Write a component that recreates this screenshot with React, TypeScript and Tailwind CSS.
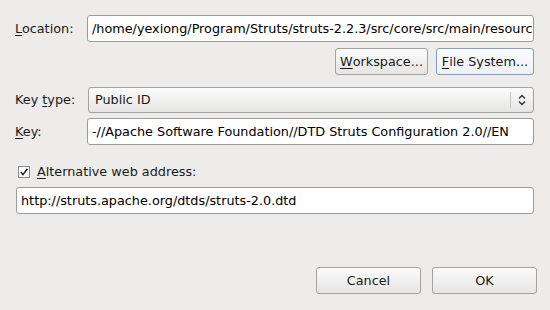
import React from "react";

const font = { fontFamily: '"DejaVu Sans", "Liberation Sans", sans-serif' };

function Mn({ c }: { c: string }) {
  return <span className="underline underline-offset-[2px] decoration-1">{c}</span>;
}

function Field({ value, className = "" }: { value: string; className?: string }) {
  return (
    <div
      className={`h-[27px] bg-white border border-[#9c9c9c] rounded-[3px] flex items-center pl-[4px] overflow-hidden whitespace-nowrap text-[12.8px] text-black ${className}`}
    >
      {value}
    </div>
  );
}

function Button({ children, focus = false, className = "" }: { children: React.ReactNode; focus?: boolean; className?: string }) {
  return (
    <div
      className={`h-[27px] rounded-[3px] border flex items-center justify-center text-[12.8px] text-[#1a1a1a] ${
        focus
          ? "border-[#7d9ec9] bg-gradient-to-b from-[#fbfcfd] to-[#eef1f5]"
          : "border-[#a3a3a3] bg-gradient-to-b from-[#fcfcfc] to-[#e6e5e4]"
      } ${className}`}
    >
      {children}
    </div>
  );
}

export default function App() {
  return (
    <div className="w-[550px] h-[310px] bg-[#edeceb] text-[12.8px] text-[#1a1a1a] pl-[15px] pr-[16px] pt-[15px]" style={font}>
      {/* Location */}
      <div className="flex items-center">
        <div className="w-[72px]">
          <Mn c="L" />ocation:
        </div>
        <Field className="flex-1" value="/home/yexiong/Program/Struts/struts-2.2.3/src/core/src/main/resources/struts-2.0.dtd" />
      </div>
      <div className="flex justify-end gap-[8px] mt-[6px]">
        <Button className="w-[93px]">
          <Mn c="W" />orkspace...
        </Button>
        <Button focus className="w-[98px]">
          <Mn c="F" />ile System...
        </Button>
      </div>

      {/* Key type */}
      <div className="flex items-center mt-[12px]">
        <div className="w-[73px]">
          Key <Mn c="t" />ype:
        </div>
        <div className="flex-1 h-[26px] rounded-[3px] border border-[#a3a3a3] bg-gradient-to-b from-[#fcfcfc] to-[#e6e5e4] flex items-center pl-[6px]">
          <span className="flex-1">Public ID</span>
          <div className="w-px h-[16px] bg-[#c6c5c4]" />
          <svg width="22" height="16" viewBox="0 0 22 16" className="shrink-0">
            <path d="M8 6.5 L11 3.5 L14 6.5" fill="none" stroke="#2e2e2e" strokeWidth="1.3" />
            <path d="M8 9.5 L11 12.5 L14 9.5" fill="none" stroke="#2e2e2e" strokeWidth="1.3" />
          </svg>
        </div>
      </div>

      {/* Key */}
      <div className="flex items-center mt-[5px]">
        <div className="w-[72px]">
          <Mn c="K" />ey:
        </div>
        <Field className="flex-1" value="-//Apache Software Foundation//DTD Struts Configuration 2.0//EN" />
      </div>

      {/* Alternative */}
      <div className="flex items-center h-[22px] mt-[16px] pl-[3px] gap-[7px]">
        <svg width="12" height="12" viewBox="0 0 12 12" className="shrink-0">
          <rect x="0.5" y="0.5" width="11" height="11" fill="#fff" stroke="#8a8a8a" />
          <path d="M2.8 6 L5 8.6 L9.4 2.8" fill="none" stroke="#1e1e1e" strokeWidth="1.5" />
        </svg>
        <span>
          <Mn c="A" />lternative web address:
        </span>
      </div>
      <Field className="mt-[4px] ml-[1px]" value="http://struts.apache.org/dtds/struts-2.0.dtd" />

      {/* Buttons */}
      <div className="flex justify-end gap-[11px] mt-[53px] -mr-[3px]">
        <Button className="w-[105px]">Cancel</Button>
        <Button className="w-[105px]">OK</Button>
      </div>
    </div>
  );
}
